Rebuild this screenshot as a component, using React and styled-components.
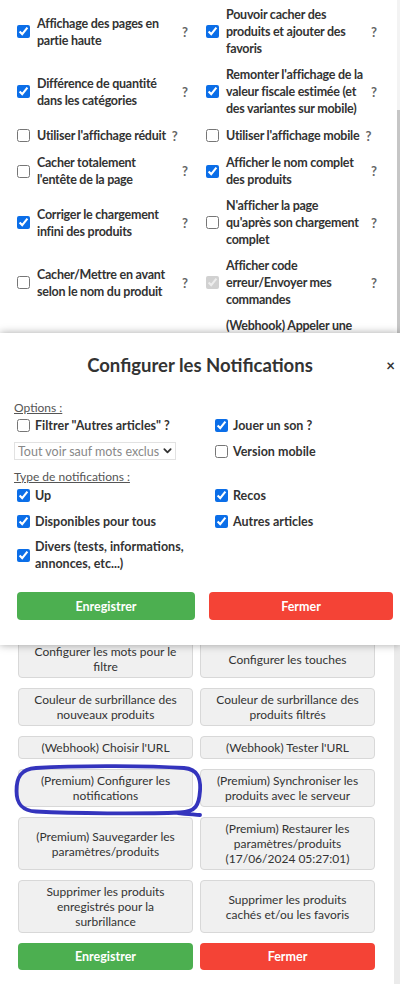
import React from "react";
import styled, { createGlobalStyle } from "styled-components";

const GlobalStyle = createGlobalStyle`
  * { box-sizing: border-box; }
  body {
    margin: 0;
    background: #fff;
    font-family: Lato, "Liberation Sans", sans-serif;
    color: #333;
  }
`;

const leftSettings = [
  { label: "Affichage des pages en partie haute", checked: true },
  { label: "Différence de quantité dans les catégories", checked: true },
  { label: "Utiliser l'affichage réduit", checked: false },
  { label: "Cacher totalement l'entête de la page", checked: false },
  { label: "Corriger le chargement infini des produits", checked: true },
  { label: "Cacher/Mettre en avant selon le nom du produit", checked: false },
  null,
];

const rightSettings = [
  { label: "Pouvoir cacher des produits et ajouter des favoris", checked: true },
  { label: "Remonter l'affichage de la valeur fiscale estimée (et des variantes sur mobile)", checked: true },
  { label: "Utiliser l'affichage mobile", checked: false },
  { label: "Afficher le nom complet des produits", checked: true },
  { label: "N'afficher la page qu'après son chargement complet", checked: false },
  { label: "Afficher code erreur/Envoyer mes commandes", checked: true, disabled: true },
  { label: "(Webhook) Appeler une URL lors de nouveaux produits", checked: false },
];

const toolButtons = [
  ["Configurer les mots pour le filtre", "Configurer les touches"],
  ["Couleur de surbrillance des nouveaux produits", "Couleur de surbrillance des produits filtrés"],
  ["(Webhook) Choisir l'URL", "(Webhook) Tester l'URL"],
  ["(Premium) Configurer les notifications", "(Premium) Synchroniser les produits avec le serveur"],
  ["(Premium) Sauvegarder les paramètres/produits", "(Premium) Restaurer les paramètres/produits (17/06/2024 05:27:01)"],
  ["Supprimer les produits enregistrés pour la surbrillance", "Supprimer les produits cachés et/ou les favoris"],
];

function App() {
  const rows = leftSettings.map((l, i) => [l, rightSettings[i]]);
  return (
    <>
      <GlobalStyle />
      <Page>
        <TopSection>
          <SettingsGrid>
            {rows.flat().map((s, i) =>
              s ? (
                <SettingCell key={i}>
                  <Check type="checkbox" defaultChecked={s.checked} disabled={s.disabled} />
                  <SettingLabel>{s.label}</SettingLabel>
                  <Help>?</Help>
                </SettingCell>
              ) : (
                <SettingCell key={i} />
              )
            )}
          </SettingsGrid>
          <Track $light="#f3f3f3">
            <Thumb />
          </Track>
        </TopSection>

        <Modal>
          <Header>
            <span />
            <Title>Configurer les Notifications</Title>
            <Close>×</Close>
          </Header>
          <OptionsGrid>
            <SectionLabel>Options :</SectionLabel>
            <Option>
              <ModalCheck type="checkbox" />
              Filtrer "Autres articles" ?
            </Option>
            <Option>
              <ModalCheck type="checkbox" defaultChecked />
              Jouer un son ?
            </Option>
            <Option>
              <SelectWrap>
                <Select defaultValue="all">
                  <option value="all">Tout voir sauf mots exclus</option>
                </Select>
                <Chevron viewBox="0 0 10 8">
                  <path d="M1.5 2 L5 5.5 L8.5 2" fill="none" stroke="#333" strokeWidth="2" strokeLinecap="round" strokeLinejoin="round" />
                </Chevron>
              </SelectWrap>
            </Option>
            <Option>
              <ModalCheck type="checkbox" />
              Version mobile
            </Option>
            <SectionLabel $tall>Type de notifications :</SectionLabel>
            <Option>
              <ModalCheck type="checkbox" defaultChecked />
              Up
            </Option>
            <Option>
              <ModalCheck type="checkbox" defaultChecked />
              Recos
            </Option>
            <Option>
              <ModalCheck type="checkbox" defaultChecked />
              Disponibles pour tous
            </Option>
            <Option>
              <ModalCheck type="checkbox" defaultChecked />
              Autres articles
            </Option>
            <Option>
              <ModalCheck type="checkbox" defaultChecked />
              <span>Divers (tests, informations, annonces, etc...)</span>
            </Option>
          </OptionsGrid>
          <ModalActions>
            <ActionButton $variant="save" $h={28}>Enregistrer</ActionButton>
            <ActionButton $variant="close" $h={28}>Fermer</ActionButton>
          </ModalActions>
        </Modal>

        <BottomSection>
          <ButtonGrid>
            {toolButtons.flat().map((t, i) =>
              i === 6 ? (
                <Marked key={i}>
                  <ToolButton>{t}</ToolButton>
                  <Scribble viewBox="0 0 190 54">
                    <path
                      d="M24 4 C70 1 140 2 172 4 C186 5 189 15 188 27 C187 41 184 48 168 48.5 C128 50 62 49.5 24 47.5 C9 46.5 4.5 39 4.5 27 C4.5 13 9 5 24 4 Z M166 49 C176 50 183 50.5 188 51"
                      fill="none"
                      stroke="#3434bd"
                      strokeWidth="3.8"
                      strokeLinecap="round"
                      strokeLinejoin="round"
                    />
                  </Scribble>
                </Marked>
              ) : (
                <ToolButton key={i}>{t}</ToolButton>
              )
            )}
            <ActionButton $variant="save" $h={27}>Enregistrer</ActionButton>
            <ActionButton $variant="close" $h={27}>Fermer</ActionButton>
          </ButtonGrid>
          <Track $light="#ebebeb" $w={6} />
        </BottomSection>
      </Page>
    </>
  );
}

export default App;

const Page = styled.div`
  width: 400px;
  height: 984px;
  overflow: hidden;
  display: flex;
  flex-direction: column;
`;

const TopSection = styled.div`
  height: 333px;
  flex-shrink: 0;
  display: flex;
  overflow: hidden;
`;

const SettingsGrid = styled.div`
  flex: 1;
  display: grid;
  grid-template-columns: 189px 189px;
  row-gap: 9px;
  align-items: center;
  align-content: start;
  padding: 6px 0 0 13px;
`;

const SettingCell = styled.div`
  display: flex;
  align-items: center;
  padding-right: 13px;
`;

const Check = styled.input`
  width: 13px;
  height: 13px;
  margin: 3px 7px 3px 4px;
  flex-shrink: 0;
  accent-color: #0b6ee8;
`;

const SettingLabel = styled.span`
  flex: 0 1 auto;
  min-width: 0;
  font-size: 12.5px;
  line-height: 17px;
  font-weight: 700;
  color: #333;
  letter-spacing: -0.25px;
`;

const Help = styled.span`
  flex-shrink: 0;
  width: 7px;
  margin-left: 6px;
  font-size: 13px;
  font-weight: 700;
  color: #666;
`;

const Track = styled.div`
  width: ${(p) => p.$w || 3}px;
  flex-shrink: 0;
  display: flex;
  flex-direction: column;
  background: ${(p) => p.$light};
`;

const Thumb = styled.div`
  margin-top: 110px;
  flex: 1;
  background: #c6c6c6;
`;

const Modal = styled.div`
  position: relative;
  z-index: 2;
  height: 312px;
  flex-shrink: 0;
  background: #fff;
  box-shadow: 0 0 8px rgba(0, 0, 0, 0.35);
  padding-top: 20px;
`;

const Header = styled.div`
  display: grid;
  grid-template-columns: 1fr auto 1fr;
  align-items: center;
`;

const Title = styled.h2`
  margin: 0;
  white-space: nowrap;
  font-size: 18.5px;
  line-height: 24px;
  font-weight: 700;
  color: #333;
`;

const Close = styled.span`
  justify-self: end;
  padding-right: 5px;
  font-size: 15px;
  line-height: 24px;
  font-weight: 700;
  color: #333;
`;

const OptionsGrid = styled.div`
  display: grid;
  grid-template-columns: 198px 1fr;
  margin-top: 23px;
  padding-left: 13px;
`;

const SectionLabel = styled.div`
  grid-column: 1 / -1;
  font-size: 12px;
  line-height: ${(p) => (p.$tall ? 18 : 16)}px;
  color: #555;
  text-decoration: underline;
  padding-left: 1px;
`;

const Option = styled.label`
  display: flex;
  align-items: center;
  min-height: 18px;
  margin-bottom: 8px;
  font-size: 12.5px;
  line-height: 17px;
  font-weight: 700;
  color: #333;
`;

const ModalCheck = styled.input`
  width: 13px;
  height: 13px;
  margin: 2px 5px 2px 4px;
  flex-shrink: 0;
  accent-color: #0b6ee8;
`;

const SelectWrap = styled.div`
  position: relative;
  width: 162px;
  margin-left: 1px;
`;

const Select = styled.select`
  appearance: none;
  display: block;
  width: 100%;
  height: 18px;
  padding: 0 14px 0 3px;
  border: 1px solid #e2e2e2;
  border-radius: 0;
  background: #fff;
  font-family: Lato, "Liberation Sans", sans-serif;
  font-size: 12.5px;
  color: #888;
`;

const Chevron = styled.svg`
  position: absolute;
  right: 4px;
  top: 5px;
  width: 9px;
  height: 8px;
  pointer-events: none;
`;

const ModalActions = styled.div`
  display: grid;
  grid-template-columns: 178px 184px;
  column-gap: 14px;
  padding-left: 17px;
  margin-top: 12px;
`;

const ActionButton = styled.button`
  height: ${(p) => p.$h}px;
  border: none;
  border-radius: 4px;
  background: ${(p) => (p.$variant === "save" ? "#4caf50" : "#f44336")};
  color: #fff;
  font-family: Lato, "Liberation Sans", sans-serif;
  font-size: 12.5px;
  font-weight: 700;
`;

const BottomSection = styled.div`
  flex: 1;
  display: flex;
  overflow: hidden;
`;

const ButtonGrid = styled.div`
  flex: 1;
  display: grid;
  grid-template-columns: 175px 175px;
  column-gap: 7px;
  row-gap: 10px;
  align-content: start;
  padding-left: 18px;
  margin-top: -5px;
`;

const ToolButton = styled.button`
  width: 100%;
  height: 100%;
  padding: 3px 11px;
  background: #f0f0f0;
  border: 1px solid #d8d8d8;
  border-radius: 4px;
  font-family: Lato, "Liberation Sans", sans-serif;
  font-size: 12px;
  line-height: 15px;
  color: #333;
  text-align: center;
`;

const Marked = styled.div`
  position: relative;
`;

const Scribble = styled.svg`
  position: absolute;
  left: -6px;
  top: -5px;
  width: 190px;
  height: 54px;
  pointer-events: none;
`;
